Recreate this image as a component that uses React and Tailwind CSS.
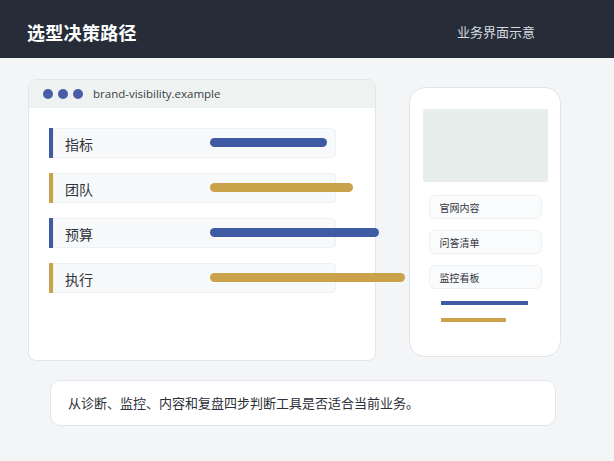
export default function App() {
  const rows = [
    { label: "指标", color: "bg-[#3f5ba3]", bar: "w-[117px]" },
    { label: "团队", color: "bg-[#c9a24b]", bar: "w-[143px]" },
    { label: "预算", color: "bg-[#3f5ba3]", bar: "w-[169px]" },
    { label: "执行", color: "bg-[#c9a24b]", bar: "w-[195px]" },
  ];
  const items = ["官网内容", "问答清单", "监控看板"];
  return (
    <div className="w-[614px] h-[461px] bg-[#f3f5f7] overflow-hidden font-['Noto_Sans_CJK_SC','Noto_Sans',sans-serif]">
      <header className="h-[58px] bg-[#262d38] flex items-center justify-between pl-[27px] pr-[79px] pt-[6px]">
        <h1 className="text-white text-[18px] font-bold tracking-[0.3px]">选型决策路径</h1>
        <span className="text-[#d7dbe0] text-[13px]">业务界面示意</span>
      </header>

      <div className="flex pl-[28px] pt-[21px]">
        {/* browser mock */}
        <div className="relative z-10 w-[348px] h-[282px] bg-white rounded-[8px] border border-[#e2e6ea] flex flex-col">
          <div className="h-[28px] bg-[#eef2f0] rounded-t-[8px] flex items-center pl-[14px] gap-[5px]">
            <span className="w-[10px] h-[10px] rounded-full bg-[#4a5ea8]" />
            <span className="w-[10px] h-[10px] rounded-full bg-[#4a5ea8]" />
            <span className="w-[10px] h-[10px] rounded-full bg-[#4a5ea8]" />
            <span className="ml-[5px] text-[11.5px] text-[#3a3f47] font-['Open_Sans',sans-serif]">brand-visibility.example</span>
          </div>
          <div className="flex flex-col gap-[15px] pl-[20px] pt-[20px]">
            {rows.map((r) => (
              <div key={r.label} className="relative w-[287px] h-[30px] flex items-stretch">
                <div className={`w-[4px] ${r.color}`} />
                <div className="flex-1 flex items-center pl-[11px] pt-[3px] bg-[#f8f9fa] border border-[#eef0f2] rounded-r-[4px] text-[14px] text-[#30343b]">
                  {r.label}
                </div>
                <div className={`absolute left-[161px] top-[10px] h-[9px] rounded-full ${r.color} ${r.bar}`} />
              </div>
            ))}
          </div>
        </div>

        {/* phone mock */}
        <div className="ml-[33px] mt-[8px] w-[152px] h-[270px] bg-white rounded-[16px] border border-[#e0e4e8] flex flex-col items-center pt-[21px]">
          <div className="w-[125px] h-[73px] bg-[#e8eeeb] rounded-[2px]" />
          <div className="flex flex-col gap-[11px] mt-[13px]">
            {items.map((t) => (
              <div key={t} className="w-[113px] h-[24px] bg-[#fafbfc] border border-[#eef0f2] rounded-[6px] flex items-center pl-[10px] text-[10px] text-[#30343b]">
                {t}
              </div>
            ))}
          </div>
          <div className="self-start ml-[31px] mt-[12px] flex flex-col gap-[13px]">
            <div className="w-[87px] h-[4px] bg-[#3f5ba3]" />
            <div className="w-[65px] h-[4px] bg-[#c9a24b]" />
          </div>
        </div>
      </div>

      <div className="ml-[50px] mt-[19px] w-[506px] h-[46px] bg-white rounded-[10px] border border-[#e2e6ea] flex items-center pl-[17px] text-[13px] text-[#2c3038]">
        从诊断、监控、内容和复盘四步判断工具是否适合当前业务。
      </div>
    </div>
  );
}
